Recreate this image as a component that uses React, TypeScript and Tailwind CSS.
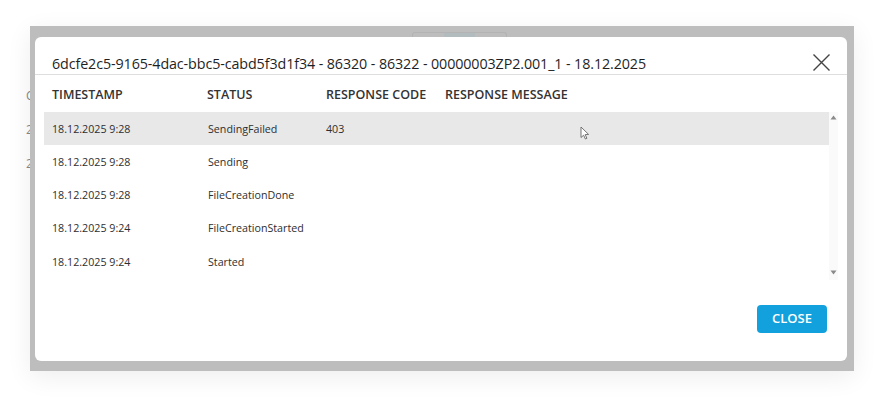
import React from "react";

const rows = [
  { ts: "18.12.2025 9:28", status: "SendingFailed", code: "403", selected: true },
  { ts: "18.12.2025 9:28", status: "Sending", code: "" },
  { ts: "18.12.2025 9:28", status: "FileCreationDone", code: "" },
  { ts: "18.12.2025 9:24", status: "FileCreationStarted", code: "" },
  { ts: "18.12.2025 9:24", status: "Started", code: "" },
];

function CloseIcon() {
  return (
    <svg width="19" height="19" viewBox="0 0 19 19" fill="none" stroke="#444" strokeWidth="1.4">
      <path d="M1.5 1.5 L17.5 17.5 M17.5 1.5 L1.5 17.5" />
    </svg>
  );
}

function Cursor() {
  return (
    <svg width="10" height="14" viewBox="0 0 10 14">
      <path d="M1 1 L1 11.5 L3.6 9.2 L5.4 13 L6.9 12.3 L5.2 8.6 L8.6 8.4 Z" fill="#fff" stroke="#666" strokeWidth="0.9" strokeLinejoin="round" />
    </svg>
  );
}

export default function App() {
  return (
    <div className="relative w-[884px] h-[405px] bg-white overflow-hidden font-['Open_Sans','Noto_Sans',sans-serif]">
      {/* underlying page peeking out on the left */}
      <div className="absolute left-[26px] top-[88px] flex flex-col gap-[19px] text-[12px] leading-[15px] text-[#888]">
        <span>C</span>
        <span>2</span>
        <span>2</span>
      </div>

      <div className="pt-[26px] pl-[30px]">
        <div className="relative w-[824px] h-[345px] bg-[#bdbdbd] pt-[11px] pl-[5px] shadow-[0_6px_24px_rgba(0,0,0,0.07)]">
          <div className="absolute left-[382px] top-[6px] h-[6px] w-[95px] rounded-t-[3px] border border-b-0 border-[#b3b3b3] flex">
            <div className="w-[31px]" />
            <div className="w-[31px] bg-[#b2bcbf]" />
          </div>

          <div className="relative w-[812px] h-[324px] bg-white rounded-[6px] flex flex-col">
            {/* header */}
            <div className="h-[38px] flex items-end justify-between border-b border-[#dedede] pl-[17px] pr-[16px]">
              <h2 className="text-[14.3px] leading-[20px] text-[#1f1f1f] tracking-[-0.1px]">
                6dcfe2c5-9165-4dac-bbc5-cabd5f3d1f34 - 86320 - 86322 - 00000003ZP2.001_1 - 18.12.2025
              </h2>
              <div className="mb-[2px]">
                <CloseIcon />
              </div>
            </div>

            {/* table */}
            <div className="pl-[9px] pr-[9px]">
              <div className="h-[37px] pt-[3px] flex items-center text-[12.5px] font-semibold text-[#333] pl-[8px]">
                <div className="w-[155px]">TIMESTAMP</div>
                <div className="w-[119px]">STATUS</div>
                <div className="w-[119px]">RESPONSE CODE</div>
                <div>RESPONSE MESSAGE</div>
              </div>
              <div className="flex">
                <div className="w-[785px] flex flex-col">
                  {rows.map((r, i) => (
                    <div
                      key={i}
                      className={`h-[33.25px] flex items-center text-[10.7px] text-[#2e2e2e] pl-[8px] ${r.selected ? "bg-[#e8e8e8]" : ""}`}
                    >
                      <div className="w-[156px]">{r.ts}</div>
                      <div className="w-[118px]">{r.status}</div>
                      <div className="w-[119px]">{r.code}</div>
                    </div>
                  ))}
                </div>
                <div className="w-[9px] h-[168px] bg-[#fafafa] flex flex-col items-center justify-between pt-[3px] pb-[5px]">
                  <svg width="7" height="5" viewBox="0 0 7 5">
                    <path d="M3.5 0.5 L6.5 4.5 L0.5 4.5 Z" fill="#8a8a8a" />
                  </svg>
                  <svg width="7" height="5" viewBox="0 0 7 5">
                    <path d="M0.5 0.5 L6.5 0.5 L3.5 4.5 Z" fill="#8a8a8a" />
                  </svg>
                </div>
              </div>
            </div>

            {/* footer */}
            <div className="flex-1 flex items-end justify-end pr-[20px] pb-[28px]">
              <button className="w-[70px] h-[28px] rounded-[4px] bg-[#13a1dd] text-white text-[13px] font-semibold">
                CLOSE
              </button>
            </div>

            <div className="absolute left-[545px] top-[89px]">
              <Cursor />
            </div>
          </div>
        </div>
      </div>
    </div>
  );
}
